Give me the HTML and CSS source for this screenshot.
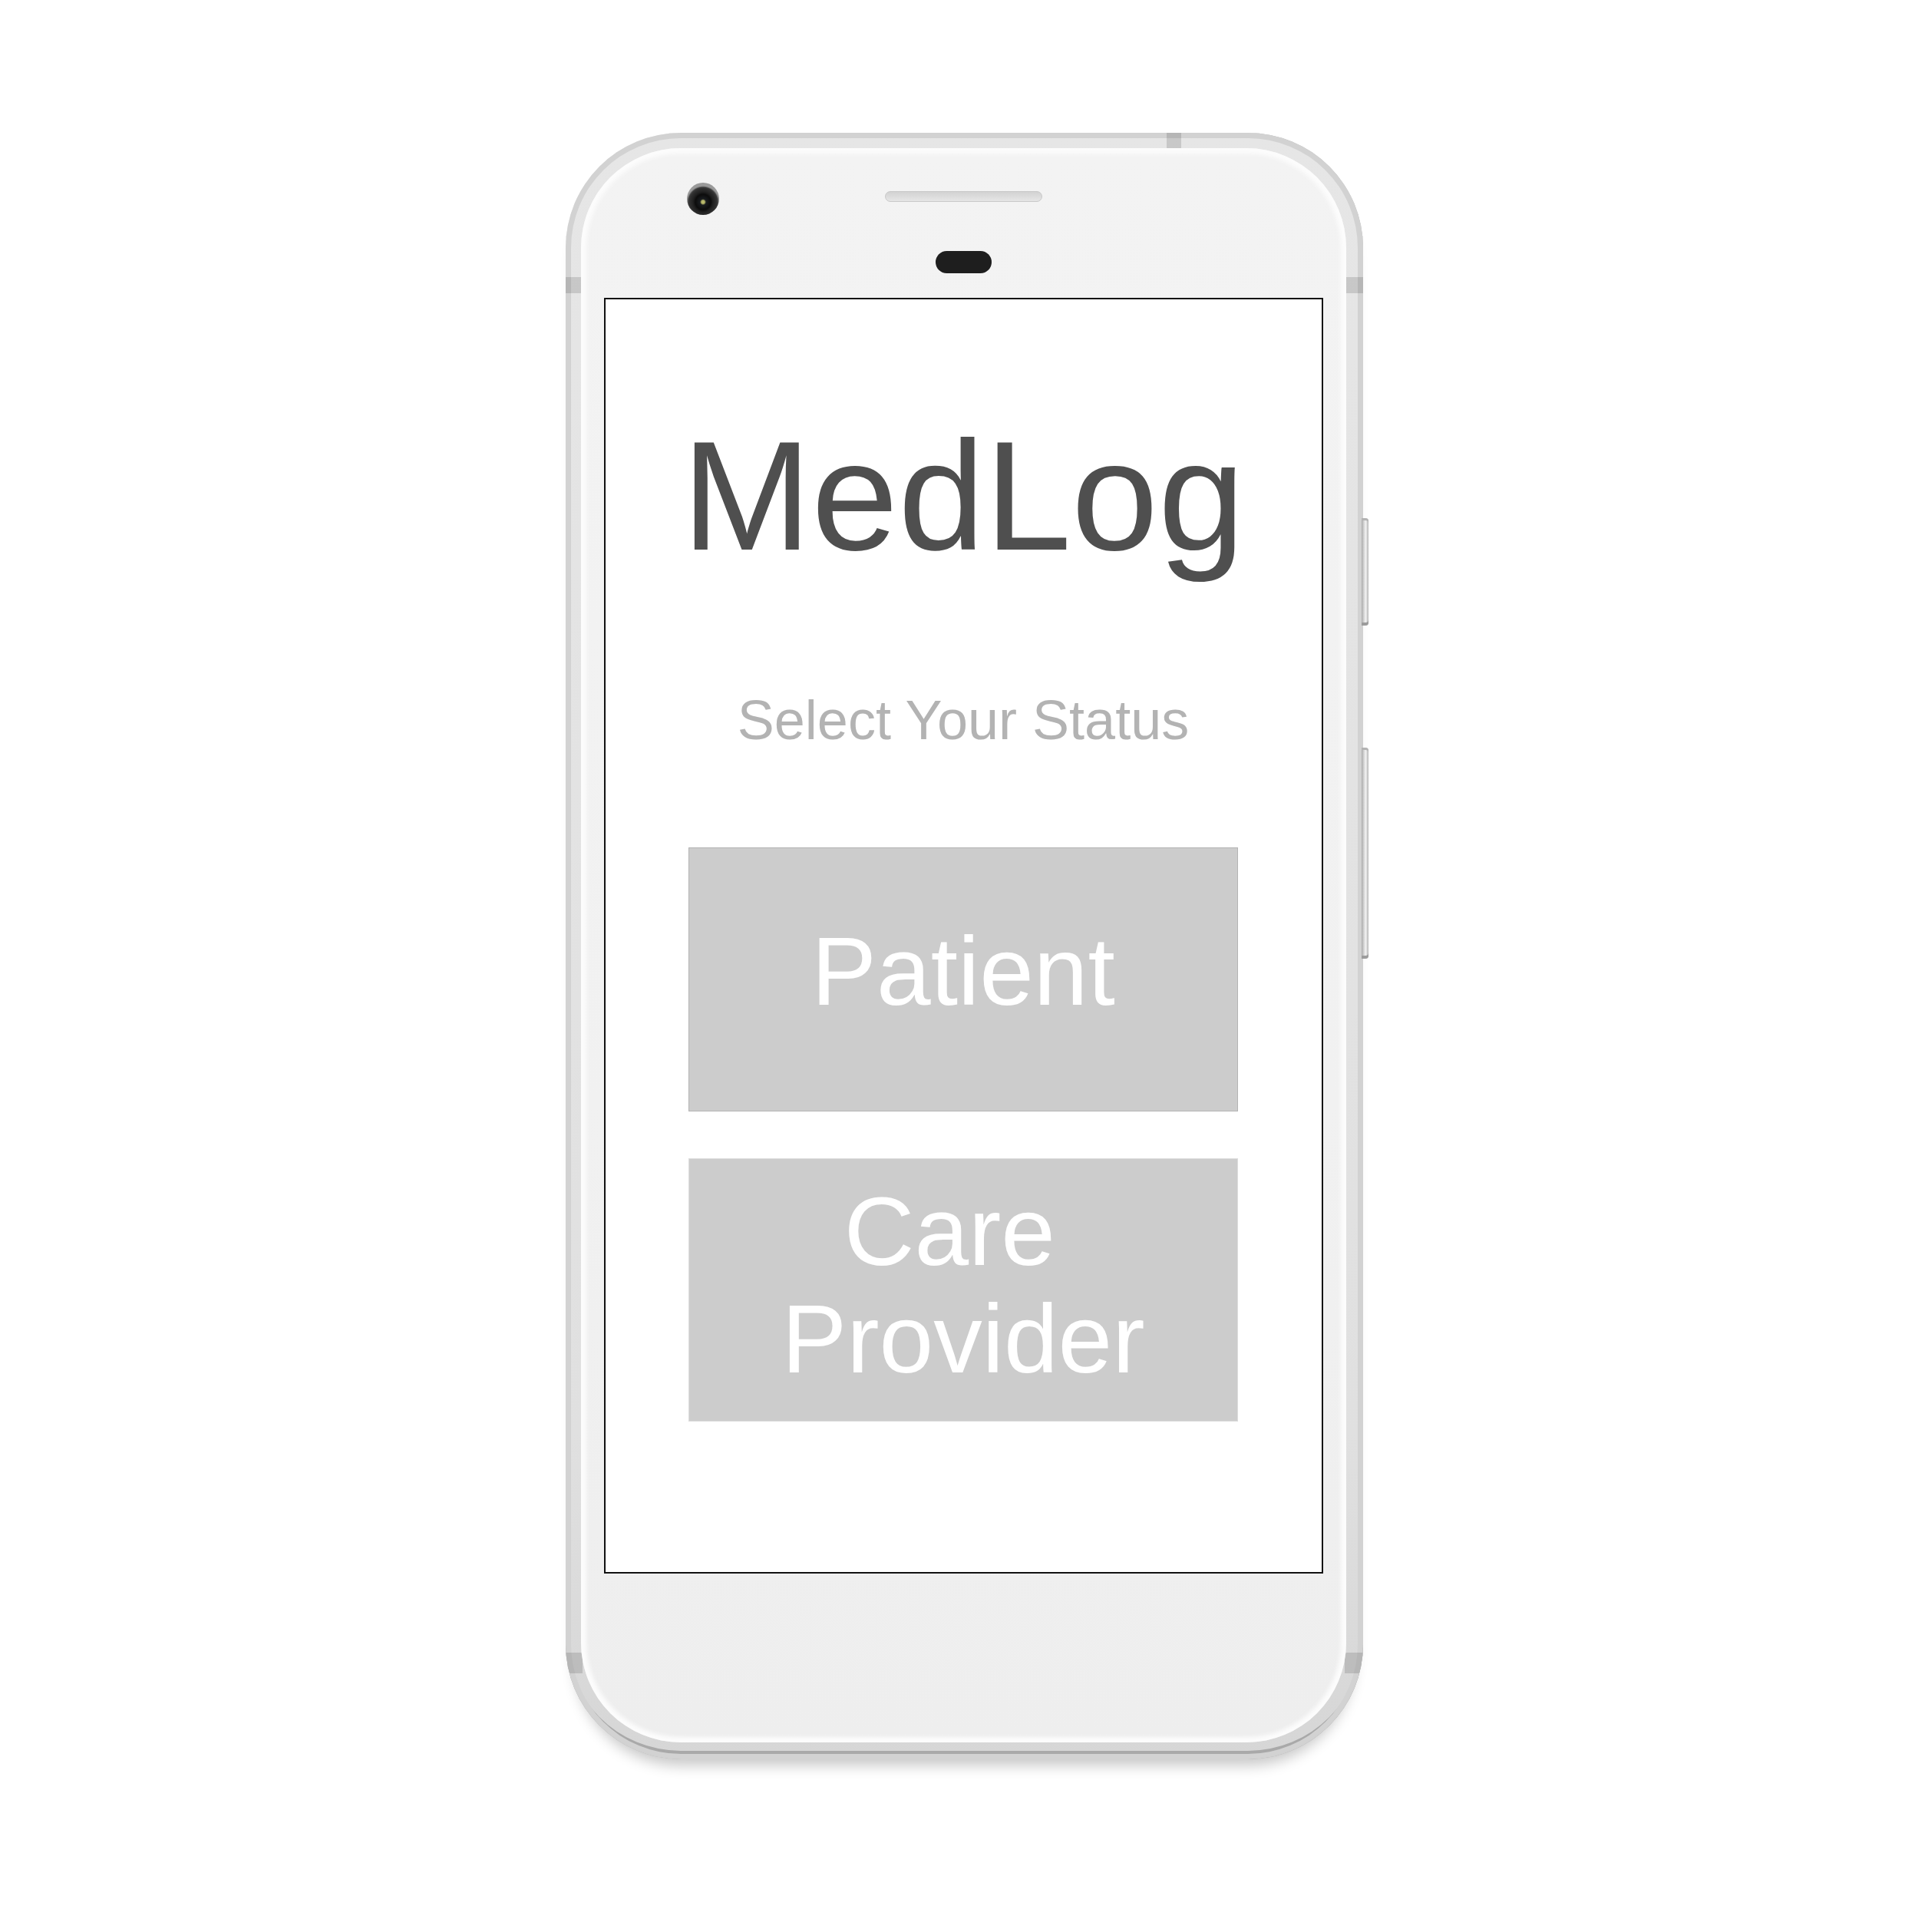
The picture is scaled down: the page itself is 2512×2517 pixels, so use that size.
FILE: index.html
```html
<!DOCTYPE html>
<html lang="en">
<head>
<meta charset="utf-8">
<title>MedLog</title>
<link rel="stylesheet" href="styles.css">
</head>
<body>
<div class="stage">
  <div class="phone">
    <div class="frame-marks">
      <span class="mark mark-top"></span>
      <span class="mark mark-left-top"></span>
      <span class="mark mark-right-top"></span>
      <span class="mark mark-left-bottom"></span>
      <span class="mark mark-right-bottom"></span>
    </div>
    <span class="side-btn side-btn-power"></span>
    <span class="side-btn side-btn-volume"></span>
    <div class="bezel">
      <div class="top-bar">
        <span class="camera"></span>
        <span class="speaker"></span>
        <span class="sensor"></span>
      </div>
      <div class="screen">
        <h1 class="title">MedLog</h1>
        <p class="subtitle">Select Your Status</p>
        <div class="choices">
          <div class="choice choice-patient"><span class="choice-label">Patient</span></div>
          <div class="choice choice-care"><span class="choice-label">Care&nbsp;<br>Provider</span></div>
        </div>
      </div>
      <div class="chin"></div>
    </div>
  </div>
</div>
</body>
</html>
```
FILE: styles.css
```css
html, body {
  margin: 0;
  background: #ffffff;
  font-family: "Liberation Sans", Arial, sans-serif;
}

.stage {
  display: flex;
  justify-content: center;
  padding-top: 173px;
  height: 2517px;
  box-sizing: border-box;
}

.phone {
  position: relative;
  width: 1039px;
  height: 2119px;
  box-sizing: border-box;
  padding: 20px 22px 22px 20px;
  border-radius: 150px;
  background: linear-gradient(#e6e6e6, #e0e0e0 80%, #d6d6d6);
  box-shadow:
    inset 0 0 0 7px #d2d2d2,
    inset 0 -11px 0 #a9a9a9,
    inset -6px 0 0 #c2c2c2,
    0 20px 18px -12px rgba(0, 0, 0, 0.22);
}

.frame-marks {
  position: absolute;
  inset: 0;
  border-radius: 150px;
  overflow: hidden;
  pointer-events: none;
}

.mark {
  position: absolute;
  background: rgba(0, 0, 0, 0.13);
}

.mark-top { left: 783px; top: 0; width: 19px; height: 20px; }
.mark-left-top { left: 0; top: 188px; width: 20px; height: 21px; }
.mark-right-top { right: 0; top: 188px; width: 22px; height: 21px; }
.mark-left-bottom { left: 0; top: 1980px; width: 22px; height: 27px; }
.mark-right-bottom { right: 0; top: 1980px; width: 24px; height: 27px; }

.side-btn {
  position: absolute;
  left: 1037px;
  width: 9px;
  border-radius: 0 4px 4px 0;
  background: linear-gradient(to right, #a9a9a9, #dcdcdc 40%, #f2f2f2 60%, #b4b4b4);
  box-shadow: inset 0 3px 0 #b3b3b3, inset 0 -4px 0 #9c9c9c;
}

.side-btn-power { top: 502px; height: 140px; }
.side-btn-volume { top: 801px; height: 275px; }

.bezel {
  position: relative;
  height: 100%;
  border-radius: 130px;
  background: linear-gradient(#f3f3f3, #f1f1f1 60%, #eeeeee);
  box-shadow: inset 0 0 5px 7px #fcfcfc;
  display: flex;
  flex-direction: column;
}

.top-bar {
  position: relative;
  height: 195px;
  box-sizing: border-box;
  padding-top: 56px;
  display: flex;
  flex-direction: column;
  align-items: center;
}

.camera {
  position: absolute;
  left: 138px;
  top: 45px;
  width: 42px;
  height: 42px;
  border-radius: 50%;
  background: radial-gradient(circle at 50% 60%, #b8b86a 0 2px, #1a1d20 4px, #0c0c0c 10px, #202020 13px, #2e2e2e 17px, #3a3a3a 19px, #9a9a9a 21px);
}

.speaker {
  width: 205px;
  height: 14px;
  box-sizing: border-box;
  border-radius: 7px;
  border: 1px solid #c9c9c9;
  background: linear-gradient(#d2d2d2, #e6e6e6);
}

.sensor {
  margin-top: 64px;
  width: 73px;
  height: 29px;
  border-radius: 15px;
  background: #1e1e1e;
}

.screen {
  margin: 0 30px;
  height: 1662px;
  box-sizing: border-box;
  border: 2px solid #111111;
  background: #ffffff;
  display: flex;
  flex-direction: column;
  align-items: center;
  padding-top: 154px;
}

.title {
  margin: 0;
  font-size: 203px;
  line-height: 203px;
  font-weight: 400;
  color: #4f4f4f;
}

.subtitle {
  margin: 155px 0 0;
  font-size: 72px;
  line-height: 72px;
  color: #b3b3b3;
}

.choices {
  margin-top: 130px;
  width: 716px;
  display: flex;
  flex-direction: column;
  gap: 61px;
}

.choice {
  box-sizing: border-box;
  background: #cccccc;
  color: #ffffff;
  font-size: 127px;
  line-height: 140px;
  text-align: center;
  display: flex;
  align-items: center;
  justify-content: center;
}

.choice-patient {
  height: 344px;
  border: 1px solid #b4b4b4;
}

.choice-patient .choice-label {
  margin-bottom: 22px;
}

.choice-care {
  height: 343px;
  border: 1px solid #dcdcdc;
}

.choice-care .choice-label {
  margin-bottom: 13px;
}

.chin {
  flex: 1;
}
```
